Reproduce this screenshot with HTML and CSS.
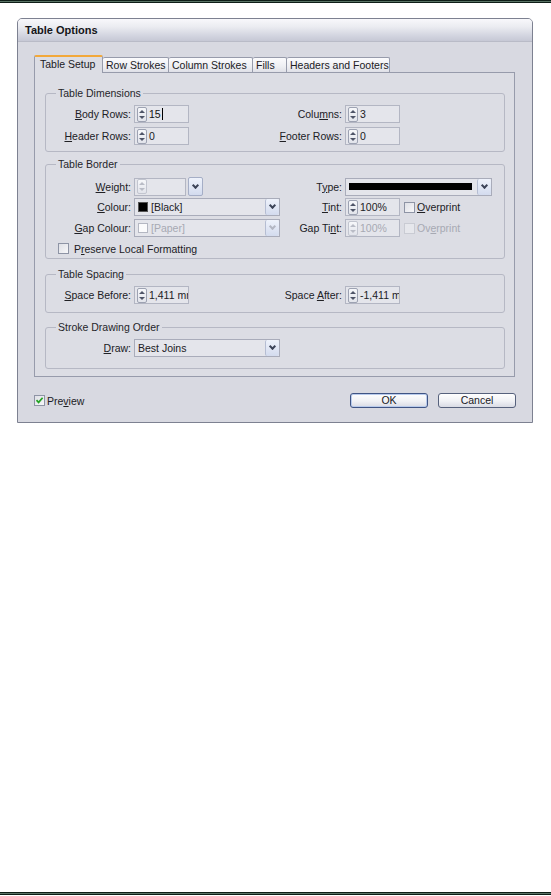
FILE: index.html
```
<!DOCTYPE html>
<html lang="en">
<head>
<meta charset="utf-8">
<title>Table Options</title>
<link rel="stylesheet" href="styles.css">
</head>
<body>
<div class="page">
  <div class="rule"></div>
  <div class="dialog">
    <div class="titlebar">Table Options</div>
    <div class="body">
      <div class="tabs">
        <div class="tab active tab-setup">Table Setup</div>
        <div class="tab tab-row">Row Strokes</div>
        <div class="tab tab-col">Column Strokes</div>
        <div class="tab tab-fills">Fills</div>
        <div class="tab tab-hf">Headers and Footers</div>
      </div>
      <div class="panel">
        <fieldset class="grp grp-dim">
          <legend>Table Dimensions</legend>
          <div class="rows rows-4">
            <div class="row">
              <span class="lbl"><u>B</u>ody Rows:</span>
              <div class="field"><span class="spin"></span><span class="val sel">15</span><span class="caret"></span></div>
              <span class="lbl">Colu<u>m</u>ns:</span>
              <div class="field"><span class="spin"></span><span class="val">3</span></div>
            </div>
            <div class="row">
              <span class="lbl"><u>H</u>eader Rows:</span>
              <div class="field"><span class="spin"></span><span class="val">0</span></div>
              <span class="lbl"><u>F</u>ooter Rows:</span>
              <div class="field"><span class="spin"></span><span class="val">0</span></div>
            </div>
          </div>
        </fieldset>

        <fieldset class="grp grp-border">
          <legend>Table Border</legend>
          <div class="rows rows-3">
            <div class="row">
              <span class="lbl"><u>W</u>eight:</span>
              <div class="combo">
                <div class="field field-weight disabled"><span class="spin"></span></div>
                <span class="arrow arrow-btn"></span>
              </div>
              <span class="lbl">T<u>y</u>pe:</span>
              <div class="select select-type"><span class="stroke-line"></span><span class="arrow"></span></div>
            </div>
            <div class="row">
              <span class="lbl"><u>C</u>olour:</span>
              <div class="select"><span class="swatch"></span><span class="val">[Black]</span><span class="arrow"></span></div>
              <span class="lbl"><u>T</u>int:</span>
              <div class="combo">
                <div class="field"><span class="spin"></span><span class="val">100%</span></div>
                <span class="cb cb-after"></span>
                <span class="cb-text"><u>O</u>verprint</span>
              </div>
            </div>
            <div class="row">
              <span class="lbl"><u>G</u>ap Colour:</span>
              <div class="select disabled"><span class="swatch swatch-paper"></span><span class="val">[Paper]</span><span class="arrow"></span></div>
              <span class="lbl">Gap Ti<u>n</u>t:</span>
              <div class="combo">
                <div class="field disabled"><span class="spin"></span><span class="val">100%</span></div>
                <span class="cb cb-after disabled"></span>
                <span class="cb-text disabled">Ov<u>e</u>rprint</span>
              </div>
            </div>
            <div class="row row-check">
              <span class="cb"></span>
              <span class="cb-text">P<u>r</u>eserve Local Formatting</span>
            </div>
          </div>
        </fieldset>

        <fieldset class="grp grp-spacing">
          <legend>Table Spacing</legend>
          <div class="row">
            <span class="lbl"><u>S</u>pace Before:</span>
            <div class="field"><span class="spin"></span><span class="val">1,411 mm</span></div>
            <span class="lbl">Space <u>A</u>fter:</span>
            <div class="field"><span class="spin"></span><span class="val">-1,411 mm</span></div>
          </div>
        </fieldset>

        <fieldset class="grp grp-draw">
          <legend>Stroke Drawing Order</legend>
          <div class="row">
            <span class="lbl"><u>D</u>raw:</span>
            <div class="select"><span class="val">Best Joins</span><span class="arrow"></span></div>
          </div>
        </fieldset>
      </div>

      <div class="footer">
        <div class="preview">
          <span class="cb checked"><svg viewBox="0 0 9 9" width="9" height="9"><path d="M1.5 4.2 L3.6 6.4 L7.6 1.8" fill="none" stroke="#23a323" stroke-width="1.7"/></svg></span>
          <span class="cb-text">Pre<u>v</u>iew</span>
        </div>
        <div class="buttons">
          <button class="btn btn-default">OK</button>
          <button class="btn">Cancel</button>
        </div>
      </div>
    </div>
  </div>
  <div class="rule rule-bottom"></div>
</div>
</body>
</html>
```

FILE: styles.css
```
html, body {
  margin: 0;
  padding: 0;
  background: #ffffff;
}

body {
  font-family: "Liberation Sans", Arial, sans-serif;
  font-size: 10.5px;
  color: #202024;
}

.page {
  width: 551px;
  height: 896px;
  display: flex;
  flex-direction: column;
}

.rule {
  flex: none;
  height: 3px;
  background: linear-gradient(#0e1e17 0 1px, #5a7466 1px 2px, #0e1e17 2px 3px);
}

.rule-bottom {
  margin-top: auto;
  margin-bottom: 1px;
}

/* dialog window */
.dialog {
  flex: none;
  margin: 15px 0 0 17px;
  width: 516px;
  height: 405px;
  box-sizing: border-box;
  border: 1px solid #7d8191;
  border-radius: 5px 5px 0 0;
  background: #d8d9e1;
  display: flex;
  flex-direction: column;
}

.titlebar {
  height: 23px;
  box-sizing: border-box;
  line-height: 22px;
  padding-left: 7px;
  font-size: 11px;
  font-weight: bold;
  color: #141418;
  border-bottom: 1px solid #b9bbc7;
  border-radius: 4px 4px 0 0;
  background: linear-gradient(#f8f8fb, #ebecf1 35%, #d3d5e0 75%, #c6c8d5);
}

.body {
  padding: 13px 16px 14px 16px;
  display: flex;
  flex-direction: column;
}

/* tabs */
.tabs {
  display: flex;
  align-items: flex-end;
  height: 17px;
  position: relative;
  z-index: 1;
}

.tab {
  height: 15px;
  box-sizing: border-box;
  border: 1px solid #979bab;
  border-bottom: none;
  border-left: none;
  border-radius: 2px 2px 0 0;
  padding-left: 3px;
  line-height: 14px;
  white-space: nowrap;
  background: linear-gradient(#fbfbfd, #eeeff3 60%, #dfe0e7);
}

.tab.active {
  height: 18px;
  margin-bottom: -1px;
  border-left: 1px solid #979bab;
  border-top: 2px solid #f2a83a;
  padding-left: 5px;
  line-height: 15px;
  background: #dcdde4;
  position: relative;
}

.tab-setup { width: 69px; }
.tab-row { width: 66px; }
.tab-col { width: 84px; }
.tab-fills { width: 34px; }
.tab-hf { width: 103px; }

.panel {
  width: 481px;
  height: 305px;
  box-sizing: border-box;
  border: 1px solid #979bab;
  background: #dcdde4;
  padding: 14px 9px 0 10px;
  display: flex;
  flex-direction: column;
}

/* groups */
.grp {
  width: 460px;
  box-sizing: border-box;
  margin: 0;
  padding: 0;
  border: 1px solid #b6b8c4;
  border-radius: 3px;
  min-inline-size: 0;
}

.grp legend {
  margin-left: 10px;
  padding: 0 2px;
  line-height: 12px;
  height: 12px;
  color: #25252a;
}

.grp-dim { padding: 6px 0 6px 0; }
.grp-border { margin-top: 6px; padding: 7px 0 1px 0; }
.grp-spacing { margin-top: 9px; padding: 6px 0 8px 0; }
.grp-draw { margin-top: 8px; padding: 6px 0 11px 0; }

.rows {
  display: flex;
  flex-direction: column;
}

.rows-4 { gap: 4px; }
.rows-3 { gap: 3px; }

.row {
  display: grid;
  grid-template-columns: 85px 146px 59px auto;
  column-gap: 3px;
  align-items: center;
  height: 18px;
}

.row-check {
  display: flex;
  height: 17px;
  padding-left: 12px;
}

.lbl {
  justify-self: end;
  white-space: nowrap;
  text-align: right;
}

u {
  text-decoration: underline;
  text-underline-offset: 1px;
}

/* spin fields */
.field {
  width: 55px;
  height: 18px;
  box-sizing: border-box;
  border: 1px solid #b3b6c3;
  background: #e4e5eb;
  display: flex;
  align-items: center;
  gap: 2px;
  padding-left: 2px;
  overflow: hidden;
  white-space: nowrap;
}

.field-weight {
  width: 52px;
}

.spin {
  flex: none;
  position: relative;
  width: 10px;
  height: 15px;
  box-sizing: border-box;
  border: 1px solid #9da2b2;
  border-radius: 2px;
  background: linear-gradient(#f6f7fa, #e2e4eb);
}

.spin::before,
.spin::after {
  content: "";
  position: absolute;
  left: 1px;
  width: 0;
  height: 0;
  border-left: 3px solid transparent;
  border-right: 3px solid transparent;
}

.spin::before {
  top: 2px;
  border-bottom: 3px solid #4f5568;
}

.spin::after {
  bottom: 2px;
  border-top: 3px solid #4f5568;
}

.val {
  white-space: nowrap;
}

.sel {
  color: #111;
}

.caret {
  flex: none;
  width: 1px;
  height: 12px;
  margin-left: -1px;
  background: #000;
}

.disabled .val,
.cb-text.disabled {
  color: #a7a9b3;
}

.disabled .spin {
  border-color: #c2c5cf;
}

.disabled .spin::before {
  border-bottom-color: #b9bcc6;
}

.disabled .spin::after {
  border-top-color: #b9bcc6;
}

/* dropdowns */
.select {
  width: 146px;
  height: 18px;
  box-sizing: border-box;
  border: 1px solid #a9acba;
  background: #e4e5eb;
  display: flex;
  align-items: center;
  gap: 3px;
  padding-left: 3px;
}

.select-type {
  width: 147px;
}

.arrow {
  margin-left: auto;
  flex: none;
  width: 14px;
  height: 16px;
  box-sizing: border-box;
  border-left: 1px solid #b5bdd2;
  border-radius: 2px;
  background: linear-gradient(#eef2fb, #d3dbee);
  display: flex;
  align-items: center;
  justify-content: center;
}

.arrow::after {
  content: "";
  width: 3px;
  height: 3px;
  margin-top: -3px;
  border-right: 2px solid #3c4458;
  border-bottom: 2px solid #3c4458;
  transform: rotate(45deg);
}

.select.disabled .arrow::after {
  border-color: #b3b7c3;
}

.arrow-btn {
  margin-left: 2px;
  width: 15px;
  height: 19px;
  border: 1px solid #a5aec6;
}

.combo {
  display: flex;
  align-items: center;
}

.stroke-line {
  width: 123px;
  height: 7px;
  background: #000;
}

.swatch {
  flex: none;
  width: 10px;
  height: 10px;
  box-sizing: border-box;
  border: 1px solid #555;
  background: #000;
}

.swatch-paper {
  border-color: #b4b7c2;
  background: #fbfbfc;
}

/* checkboxes */
.cb {
  flex: none;
  width: 11px;
  height: 11px;
  box-sizing: border-box;
  border: 1px solid #8e94a5;
  background: linear-gradient(135deg, #dfe0e6, #f7f7f9);
  display: flex;
  align-items: center;
  justify-content: center;
}

.cb.disabled {
  border-color: #c9cbd3;
  background: #e6e7ec;
}

.cb-after {
  margin-left: 4px;
}

.cb-text {
  margin-left: 2px;
  white-space: nowrap;
}

/* footer */
.footer {
  margin-top: 16px;
  height: 15px;
  display: flex;
  align-items: center;
  justify-content: space-between;
}

.preview {
  display: flex;
  align-items: center;
}

.buttons {
  display: flex;
  gap: 10px;
}

.btn {
  width: 78px;
  height: 15px;
  box-sizing: border-box;
  margin: 0;
  padding: 0;
  border: 1px solid #56617c;
  border-radius: 3px;
  background: linear-gradient(#fefefe, #f0f1f5 55%, #d9dbe4);
  font-family: "Liberation Sans", Arial, sans-serif;
  font-size: 10.5px;
  line-height: 13px;
  color: #202024;
  text-align: center;
}

.btn-default {
  border-color: #3f5484;
  box-shadow: inset 0 0 0 1px #b9cbec;
}
```
